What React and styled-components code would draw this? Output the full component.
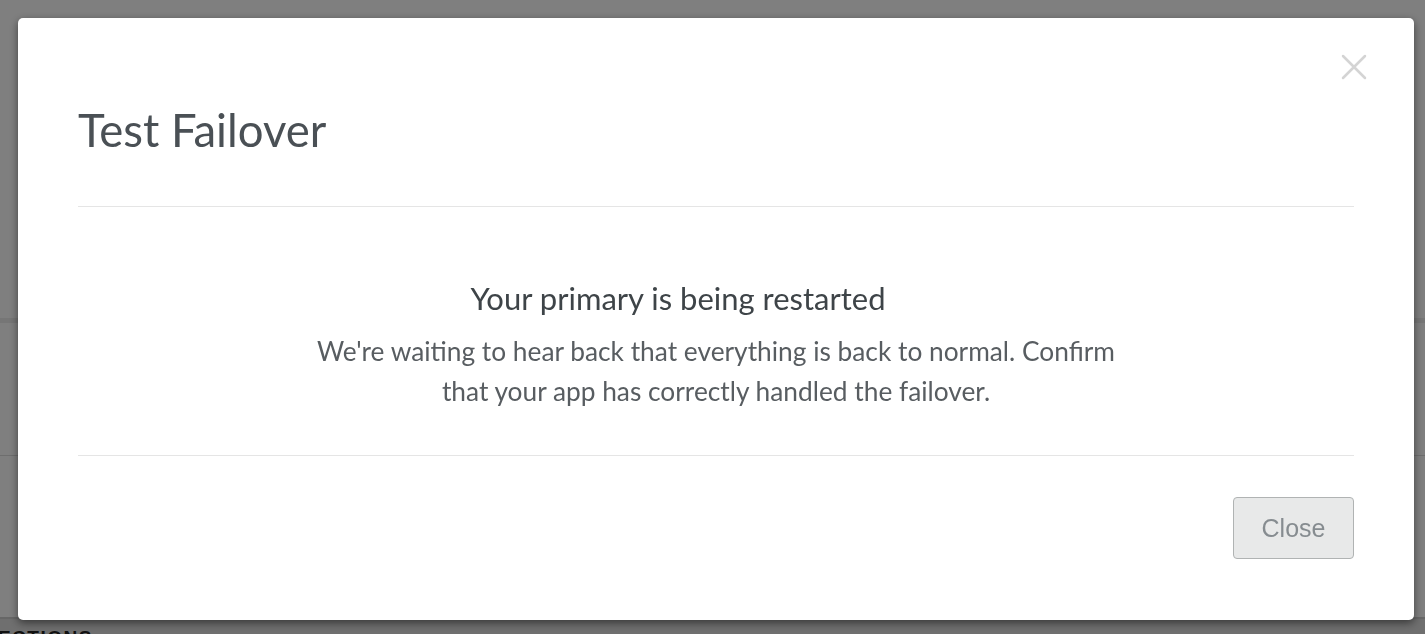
import React from "react";
import styled, { createGlobalStyle } from "styled-components";

const GlobalStyle = createGlobalStyle`
  html, body {
    margin: 0;
    padding: 0;
    height: 100%;
    overflow: hidden;
  }
  body {
    font-family: Lato, "Liberation Sans", sans-serif;
    background: #ffffff;
  }
`;

// page behind the backdrop
const Page = styled.div`
  height: 100vh;
  display: flex;
  flex-direction: column;
  background: #fff;
`;
const PageTop = styled.div`
  height: 318px;
  flex-shrink: 0;
`;
const TabBand = styled.div`
  height: 5px;
  background: #ececec;
  flex-shrink: 0;
`;
const Panel = styled.div`
  height: 132px;
  border-bottom: 1px solid #dcdcdc;
  flex-shrink: 0;
`;
const PanelLow = styled.div`
  height: 161px;
  border-bottom: 2px solid #cfcfcf;
  flex-shrink: 0;
`;
const Section = styled.div`
  flex: 1;
  display: flex;
  background: #dedede;
`;
const SectionLabel = styled.div`
  font-family: "Liberation Sans", sans-serif;
  font-weight: bold;
  font-size: 19px;
  line-height: 22px;
  letter-spacing: 1.5px;
  color: #222;
  margin: 8px 0 0 -64px;
`;

const Backdrop = styled.div`
  position: fixed;
  inset: 0;
  background: rgba(0, 0, 0, 0.5);
  display: flex;
  align-items: flex-start;
  padding: 18px 11px 0 18px;
`;

const Dialog = styled.div`
  position: relative;
  flex: 1;
  height: 602px;
  background: #fff;
  border-radius: 5px;
  box-shadow: 0 3px 9px rgba(0, 0, 0, 0.5);
  display: flex;
  flex-direction: column;
`;

const CloseX = styled.button`
  position: absolute;
  top: 36px;
  right: 47px;
  width: 26px;
  height: 26px;
  padding: 0;
  border: 0;
  background: transparent;
  cursor: pointer;
  display: flex;
`;

const Header = styled.div`
  margin: 0 60px;
  height: 189px;
  border-bottom: 1px solid #e5e5e5;
  display: flex;
  align-items: center;
  padding-top: 36px;
  box-sizing: border-box;
`;
const Title = styled.h2`
  margin: 0;
  font-weight: 400;
  font-size: 45.5px;
  line-height: 52px;
  color: #4a5055;
`;

const Body = styled.div`
  margin: 0 60px;
  height: 249px;
  border-bottom: 1px solid #e5e5e5;
  display: flex;
  flex-direction: column;
  align-items: center;
  padding-top: 73px;
  box-sizing: border-box;
`;
const Heading = styled.h3`
  margin: 0;
  font-weight: 400;
  font-size: 31px;
  line-height: 36px;
  color: #3e4448;
  padding-right: 76px;
`;
const Message = styled.p`
  margin: 15px 0 0;
  max-width: 815px;
  text-align: center;
  font-size: 26.3px;
  line-height: 40px;
  color: #585d61;
`;

const Footer = styled.div`
  margin: 0 60px;
  flex: 1;
  display: flex;
  justify-content: flex-end;
  align-items: flex-start;
  padding-top: 41px;
`;
const Button = styled.button`
  width: 121px;
  height: 62px;
  border: 1.5px solid #b0b3b3;
  border-radius: 4px;
  background: #e8e9e9;
  color: #868c90;
  font-family: "Liberation Sans", Arial, sans-serif;
  font-size: 25px;
  cursor: pointer;
`;

const App = () => {
  return (
    <>
      <GlobalStyle />
      <Page>
        <PageTop />
        <TabBand />
        <Panel />
        <PanelLow />
        <Section>
          <SectionLabel>CONNECTIONS</SectionLabel>
        </Section>
      </Page>
      <Backdrop>
        <Dialog role="dialog">
          <CloseX aria-label="Close">
            <svg width="26" height="26" viewBox="0 0 26 26">
              <path
                d="M2 2 L24 24 M24 2 L2 24"
                stroke="#d4d4d4"
                strokeWidth="2.5"
                strokeLinecap="round"
              />
            </svg>
          </CloseX>
          <Header>
            <Title>Test Failover</Title>
          </Header>
          <Body>
            <Heading>Your primary is being restarted</Heading>
            <Message>
              We're waiting to hear back that everything is back to normal.
              Confirm that your app has correctly handled the failover.
            </Message>
          </Body>
          <Footer>
            <Button>Close</Button>
          </Footer>
        </Dialog>
      </Backdrop>
    </>
  );
};

export default App;
